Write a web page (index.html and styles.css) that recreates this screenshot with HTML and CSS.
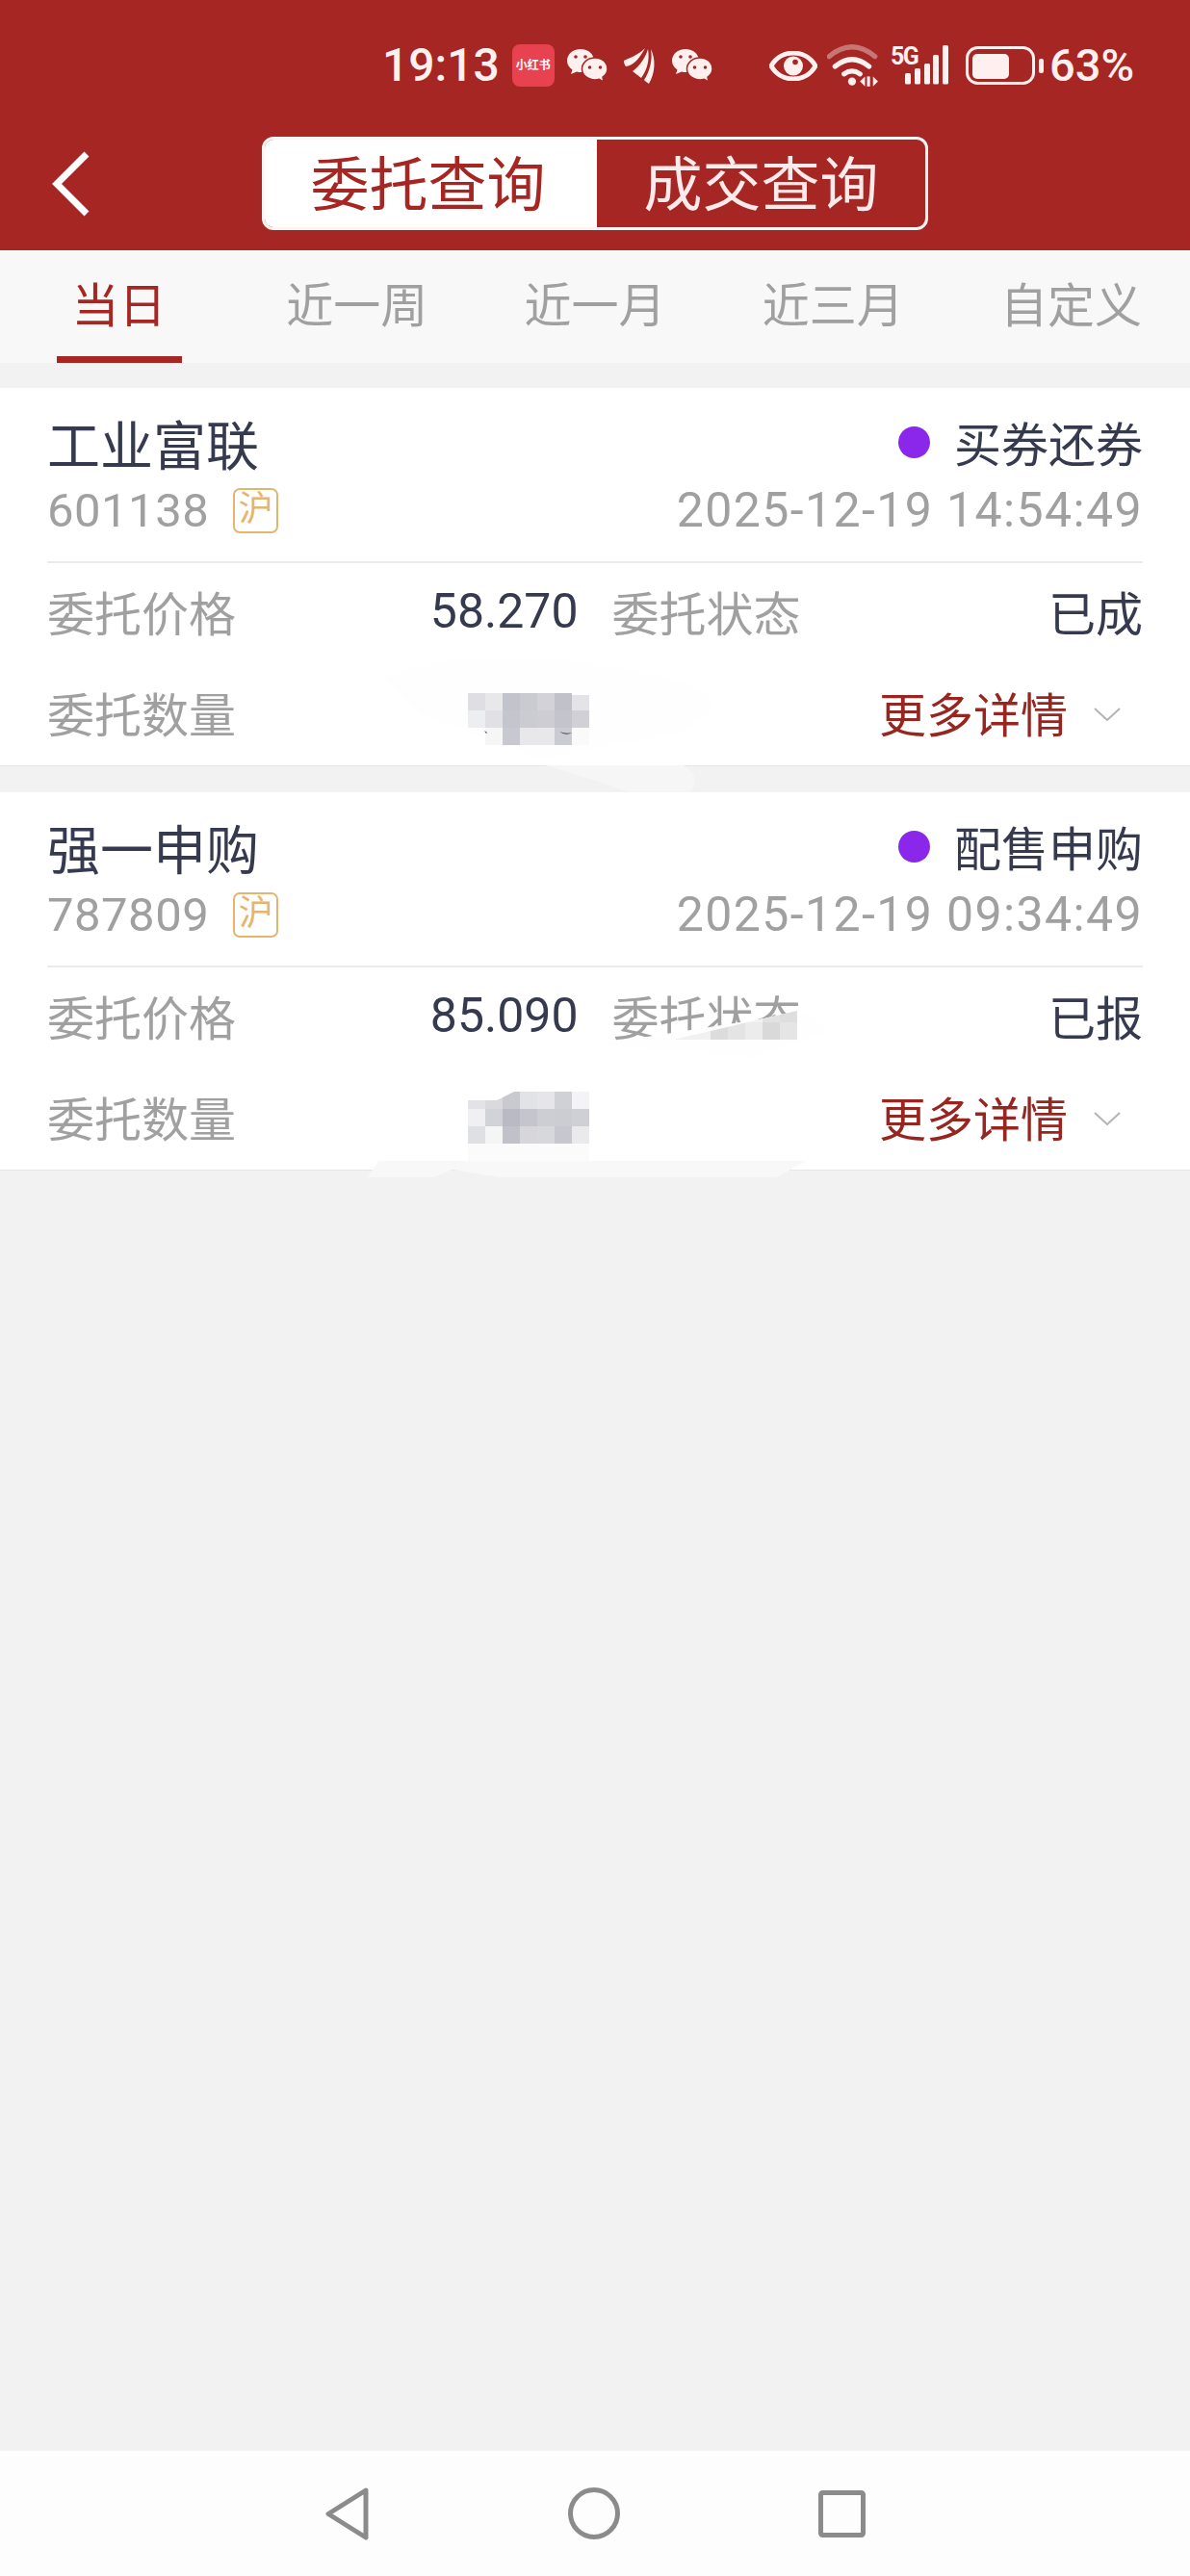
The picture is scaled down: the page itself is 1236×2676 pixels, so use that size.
FILE: index.html

```html
<!DOCTYPE html>
<html lang="zh-CN">
<head>
  <meta charset="UTF-8">
  <title>委托查询</title>
  <link rel="stylesheet" href="styles.css">
</head>
<body>
  <header class="entete">
    <div class="statut">
      <div class="statut-groupe">
        <span class="heure">19:13</span>
        <span class="app-rouge">小红书</span>
        <svg class="ico-wechat" viewBox="0 0 42 35">
          <path class="blanc" d="M14 0C6 0 0 5.500 0 12c0 4 2 7 5.500 9.500L4 26l6-2.500c1.500.5 3 .6 4.500.6C22 24 28 18.500 28 12S22 0 14 0z"/>
          <path class="blanc contour" d="M29 9c-7.500 0-13.500 5-13.500 11.500S21.500 32 29 32c1.500 0 3-.2 4.300-.7L38 34l-1-5c3-2 5-5 5-8.500C42 14 36.500 9 29 9z"/>
          <circle class="rouge" cx="9" cy="8" r="1.800"/><circle class="rouge" cx="19" cy="8" r="1.800"/>
          <circle class="rouge" cx="23.500" cy="19" r="1.800"/><circle class="rouge" cx="34.500" cy="19" r="1.800"/>
        </svg>
        <svg class="ico-plume" viewBox="0 0 33 37">
          <path class="blanc" d="M22 0C16 6 7 10 0 13c0 2 .5 4 2 6 7-1 13-6 20-19z"/>
          <path class="blanc" d="M25 1C23 9 16 19 9 24c3 2 6 5 9 7 6-8 9-19 7-30z"/>
          <path class="blanc" d="M28 1c5 10 5 24-2 36-2-1-4-3-5-4 6-9 9-21 7-32z"/>
        </svg>
        <svg class="ico-wechat" viewBox="0 0 42 35">
          <path class="blanc" d="M14 0C6 0 0 5.500 0 12c0 4 2 7 5.500 9.500L4 26l6-2.500c1.500.5 3 .6 4.500.6C22 24 28 18.500 28 12S22 0 14 0z"/>
          <path class="blanc contour" d="M29 9c-7.500 0-13.500 5-13.500 11.500S21.500 32 29 32c1.500 0 3-.2 4.300-.7L38 34l-1-5c3-2 5-5 5-8.500C42 14 36.500 9 29 9z"/>
          <circle class="rouge" cx="9" cy="8" r="1.800"/><circle class="rouge" cx="19" cy="8" r="1.800"/>
          <circle class="rouge" cx="23.500" cy="19" r="1.800"/><circle class="rouge" cx="34.500" cy="19" r="1.800"/>
        </svg>
      </div>
      <div class="statut-groupe">
        <svg class="ico-oeil" viewBox="0 0 50 31">
          <path class="trait" d="M2 15.500C12-2.500 38-2.500 48 15.500C38 33.500 12 33.500 2 15.500z"/>
          <circle class="blanc" cx="25" cy="15.500" r="10"/>
          <circle class="rouge" cx="27" cy="11.500" r="2.800"/>
        </svg>
        <svg class="ico-wifi" viewBox="0 0 52 42">
          <path class="trait faible" d="M2 12Q25-7 48 12"/>
          <path class="trait" d="M8 22Q25 8 42 22"/>
          <path class="trait" d="M17 29.500Q25 24 33 29.500"/>
          <circle class="blanc" cx="25" cy="37" r="4"/>
          <polygon class="blanc" points="33,37 38,32 38,42"/>
          <rect class="blanc" x="40" y="32" width="3" height="10"/>
          <polygon class="blanc" points="46,32 51,37 46,42"/>
        </svg>
        <svg class="ico-reseau" viewBox="0 0 61 42">
          <text class="cinq-g" x="0" y="20">5G</text>
          <rect class="blanc" x="15" y="29" width="6" height="11.500" rx="1.500"/>
          <rect class="blanc" x="25" y="24" width="6" height="16.500" rx="1.500"/>
          <rect class="blanc" x="35" y="19" width="6" height="21.500" rx="1.500"/>
          <rect class="blanc" x="44" y="10" width="6" height="30.500" rx="1.500"/>
          <rect class="blanc" x="54" y="0" width="6" height="40.500" rx="1.500"/>
        </svg>
        <svg class="ico-batterie" viewBox="0 0 81 40">
          <rect class="trait fin" x="1.500" y="1.500" width="69" height="37" rx="11"/>
          <rect class="blanc" x="7" y="8" width="38" height="26" rx="5"/>
          <rect class="blanc" x="76" y="13" width="5" height="15" rx="2"/>
        </svg>
        <span class="pourcent">63%</span>
      </div>
    </div>
    <div class="titre">
      <svg class="retour" viewBox="0 0 40 68">
        <path d="M36 3L5 34L36 65"/>
      </svg>
      <div class="segment">
        <span class="segment-item actif">委托查询</span>
        <span class="segment-item">成交查询</span>
      </div>
    </div>
  </header>

  <nav class="onglets">
    <span class="onglet actif">当日</span>
    <span class="onglet">近一周</span>
    <span class="onglet">近一月</span>
    <span class="onglet">近三月</span>
    <span class="onglet">自定义</span>
  </nav>

  <main class="liste">
    <article class="carte">
      <div class="ligne-haut">
        <span class="nom">工业富联</span>
        <span class="type"><i class="point"></i>买券还券</span>
      </div>
      <div class="ligne-code">
        <span class="code">601138<b class="marche">沪</b></span>
        <span class="date">2025-12-19 14:54:49</span>
      </div>
      <div class="details">
        <div class="cellule"><span class="label">委托价格</span><span class="valeur">58.270</span></div>
        <div class="cellule"><span class="label">委托状态</span><span class="valeur">已成</span></div>
        <div class="cellule"><span class="label">委托数量</span></div>
        <div class="cellule plus">
          <span class="lien">更多详情</span>
          <svg class="chevron" viewBox="0 0 28 14"><path d="M1 1L14 13L27 1"/></svg>
        </div>
      </div>
      <!-- retouches de la capture : pixels flous et taches -->
      <svg class="retouche" viewBox="0 0 1236 440">
        <path fill="#fefefe" d="M400 300Q480 265 640 290T700 360L560 385L440 340z"/>
        <rect x="486" y="317" width="18" height="18" fill="#dfdfe3"/><rect x="504" y="317" width="18" height="18" fill="#e8e8eb"/>
        <rect x="522" y="317" width="18" height="18" fill="#c3c3cb"/><rect x="540" y="317" width="18" height="18" fill="#cacad1"/>
        <rect x="558" y="317" width="18" height="18" fill="#d2d2d8"/><rect x="576" y="317" width="18" height="18" fill="#c1c1ca"/>
        <rect x="594" y="319" width="18" height="16" fill="#e4e4e8"/>
        <rect x="486" y="335" width="18" height="18" fill="#edeef0"/><rect x="504" y="335" width="18" height="18" fill="#e1e1e5"/>
        <rect x="522" y="335" width="18" height="18" fill="#c5c5cd"/><rect x="540" y="335" width="18" height="18" fill="#cbcbd2"/>
        <rect x="558" y="335" width="18" height="18" fill="#cdcdd3"/><rect x="576" y="335" width="18" height="18" fill="#c4c4cc"/>
        <rect x="594" y="335" width="18" height="18" fill="#d0d0d6"/>
        <rect x="504" y="353" width="18" height="18" fill="#f6f6f7"/><rect x="522" y="353" width="18" height="18" fill="#c8c8d0"/>
        <rect x="540" y="353" width="18" height="18" fill="#e8e8ea"/><rect x="558" y="353" width="18" height="18" fill="#e8e8ea"/>
        <rect x="576" y="353" width="18" height="18" fill="#cbcbd2"/><rect x="594" y="353" width="18" height="18" fill="#fafafa"/>
        <path fill="#3a3e55" d="M581 357Q588 360 594 358Q588 362 581 357zM503 356l3 2l-1 1z"/>
        <path fill="#f6f6f6" d="M567 392H710Q722 398 722 410Q720 420 710 425L665 424L625 410z"/>
      </svg>
    </article>

    <article class="carte">
      <div class="ligne-haut">
        <span class="nom">强一申购</span>
        <span class="type"><i class="point"></i>配售申购</span>
      </div>
      <div class="ligne-code">
        <span class="code">787809<b class="marche">沪</b></span>
        <span class="date">2025-12-19 09:34:49</span>
      </div>
      <div class="details">
        <div class="cellule"><span class="label">委托价格</span><span class="valeur">85.090</span></div>
        <div class="cellule"><span class="label">委托状态</span><span class="valeur">已报</span></div>
        <div class="cellule"><span class="label">委托数量</span></div>
        <div class="cellule plus">
          <span class="lien">更多详情</span>
          <svg class="chevron" viewBox="0 0 28 14"><path d="M1 1L14 13L27 1"/></svg>
        </div>
      </div>
      <svg class="retouche" viewBox="0 0 1236 440">
        <defs><clipPath id="diagonale"><polygon points="699,257 828,227 828,257"/></clipPath></defs>
        <path fill="#fefefe" d="M620 262L840 228L860 250L780 275z"/>
        <polygon fill="#ffffff" points="699,257 828,227 828,257"/>
        <g clip-path="url(#diagonale)">
          <rect x="702" y="239" width="36" height="18" fill="#f1f1f1"/><rect x="738" y="239" width="18" height="18" fill="#dcdcdc"/>
          <rect x="756" y="239" width="18" height="18" fill="#e4e4e4"/><rect x="774" y="239" width="18" height="18" fill="#ececec"/>
          <rect x="792" y="239" width="18" height="18" fill="#d9d9d9"/><rect x="810" y="239" width="18" height="18" fill="#e5e5e5"/>
          <rect x="774" y="227" width="18" height="12" fill="#f2f2f2"/><rect x="792" y="227" width="18" height="12" fill="#e2e2e2"/>
          <rect x="810" y="227" width="18" height="12" fill="#dedede"/>
        </g>
        <rect x="486" y="311" width="18" height="18" fill="#e2e3e6"/><rect x="504" y="311" width="18" height="18" fill="#d9d9de"/>
        <rect x="522" y="311" width="18" height="18" fill="#c9cad0"/><rect x="540" y="311" width="18" height="18" fill="#e2e3e7"/>
        <rect x="558" y="311" width="18" height="18" fill="#e6e6e9"/><rect x="576" y="311" width="18" height="18" fill="#d0d1d6"/>
        <rect x="594" y="311" width="18" height="18" fill="#f4f4f6"/>
        <polygon fill="#ffffff" points="486,311 534,311 516,320 486,320"/>
        <rect x="486" y="329" width="18" height="18" fill="#f0f0f2"/><rect x="504" y="329" width="18" height="18" fill="#d2d3d8"/>
        <rect x="522" y="329" width="18" height="18" fill="#b9bac3"/><rect x="540" y="329" width="18" height="18" fill="#c5c6cd"/>
        <rect x="558" y="329" width="18" height="18" fill="#cdced4"/><rect x="576" y="329" width="18" height="18" fill="#ccccd3"/>
        <rect x="594" y="329" width="18" height="18" fill="#cfd0d6"/>
        <rect x="486" y="347" width="18" height="18" fill="#dfe0e4"/><rect x="504" y="347" width="18" height="18" fill="#f5f5f6"/>
        <rect x="522" y="347" width="18" height="18" fill="#c0c1c9"/><rect x="540" y="347" width="18" height="18" fill="#d6d6db"/>
        <rect x="558" y="347" width="18" height="18" fill="#d7d8dc"/><rect x="576" y="347" width="18" height="18" fill="#c6c7cf"/>
        <rect x="594" y="347" width="18" height="18" fill="#eaeaed"/>
        <rect x="486" y="365" width="126" height="18" fill="#fbfbfb"/>
        <path fill="#f8f8f8" d="M382 400L393 383H838L806 400H520L470 392L450 400z"/>
      </svg>
    </article>
  </main>

  <footer class="navigation">
    <svg class="nav-retour" viewBox="0 0 46 55"><path d="M42 3L3 27.500L42 52z"/></svg>
    <svg class="nav-accueil" viewBox="0 0 54 54"><circle cx="27" cy="27" r="24.500"/></svg>
    <svg class="nav-apps" viewBox="0 0 49 49"><rect x="2.500" y="2.500" width="44" height="44" rx="2"/></svg>
  </footer>
</body>
</html>
```

FILE: styles.css

```css
* {
  box-sizing: border-box;
}

body {
  margin: 0;
  min-height: 100vh;
  display: flex;
  flex-direction: column;
  background-color: #f2f2f2;
  font-family: Roboto, "Noto Sans CJK SC", sans-serif;
  color: #363a4f;
}

/* entete rouge */
.entete {
  height: 260px;
  background-color: #a52622;
}

.statut {
  height: 142px;
  padding: 46px 58px 0 397px;
  display: flex;
  justify-content: space-between;
  align-items: flex-start;
  color: #fdf0ef;
}

.statut-groupe {
  height: 44px;
  display: flex;
  align-items: center;
  gap: 13px;
}

.heure,
.pourcent {
  font-weight: 500;
  line-height: 44px;
}

.heure {
  font-size: 48px;
}

.pourcent {
  font-size: 47px;
  margin-left: -7px;
}

.app-rouge {
  width: 44px;
  height: 44px;
  display: flex;
  justify-content: center;
  align-items: center;
  border-radius: 8px;
  background-color: #e8414f;
  color: #fff;
  font-size: 12px;
  font-weight: 700;
  line-height: 1;
}

.statut svg {
  flex: none;
}

.ico-wechat {
  width: 42px;
  height: 35px;
}

.ico-plume {
  width: 33px;
  height: 37px;
  margin: 0 4px;
}

.ico-oeil {
  width: 50px;
  height: 31px;
}

.ico-wifi {
  width: 54px;
  height: 44px;
  margin-left: -3px;
}

.ico-reseau {
  width: 61px;
  height: 42px;
  margin-left: -1px;
}

.ico-batterie {
  width: 81px;
  height: 40px;
  margin-left: 4px;
}

.blanc {
  fill: #fdf0ef;
}

.rouge {
  fill: #a52622;
}

.contour {
  stroke: #a52622;
  stroke-width: 1.5;
}

.trait {
  fill: none;
  stroke: #fdf0ef;
  stroke-width: 5;
  stroke-linecap: round;
}

.trait.fin {
  stroke-width: 3;
}

.faible {
  opacity: 0.4;
}

.cinq-g {
  fill: #fdf0ef;
  font-size: 25px;
  font-weight: 700;
  letter-spacing: -1.5px;
}

.titre {
  display: grid;
  grid-template-columns: 1fr auto 1fr;
}

.retour {
  width: 40px;
  height: 68px;
  margin: 15px 0 0 54px;
}

.retour path {
  fill: none;
  stroke: #fff;
  stroke-width: 7;
}

.segment {
  width: 692px;
  height: 97px;
  display: flex;
  border: 3px solid #fdf3f2;
  border-radius: 12px;
  overflow: hidden;
}

.segment-item {
  flex: 1;
  font-size: 61px;
  line-height: 96px;
  text-align: center;
  color: #fdeaea;
}

.segment-item.actif {
  flex: 0 0 345px;
  padding-right: 6px;
  background-color: #fff;
  color: #a52622;
}

/* onglets de periode */
.onglets {
  height: 117px;
  display: grid;
  grid-template-columns: repeat(5, 1fr);
  background-color: #f8f8f8;
}

.onglet {
  font-size: 49px;
  line-height: 118px;
  text-align: center;
  color: #a0a0a0;
}

.onglet.actif {
  justify-self: center;
  width: 130px;
  height: 117px;
  color: #a52622;
  border-bottom: 7px solid #a52622;
}

/* cartes */
.liste {
  margin-top: 26px;
  display: flex;
  flex-direction: column;
  gap: 27px;
}

.carte {
  position: relative;
  height: 393px;
  padding: 31px 49px 0;
  background-color: #fff;
  border-bottom: 1px solid #e6e6e6;
}

.ligne-haut,
.ligne-code {
  height: 60px;
  display: flex;
  justify-content: space-between;
  align-items: center;
}

.ligne-code {
  margin-top: 6px;
}

.nom {
  font-size: 55px;
  line-height: 60px;
}

.type {
  display: flex;
  align-items: center;
  gap: 25px;
  font-size: 49px;
  line-height: 60px;
}

.point {
  width: 33px;
  height: 33px;
  margin-top: -10px;
  border-radius: 50%;
  background-color: #8b27ea;
}

.code {
  display: flex;
  align-items: center;
  font-size: 49px;
  letter-spacing: 0.5px;
  color: #a0a0a0;
}

.marche {
  width: 47px;
  height: 47px;
  margin-left: 25px;
  border: 2px solid #e5b56e;
  border-radius: 7px;
  font-size: 36px;
  font-weight: 400;
  line-height: 41px;
  letter-spacing: 0;
  text-align: center;
  color: #e5b56e;
}

.date {
  font-size: 50px;
  letter-spacing: 1.4px;
  color: #a0a0a0;
}

.details {
  margin-top: 23px;
  border-top: 2px solid #ebebeb;
  display: grid;
  grid-template-columns: 1fr 1fr;
  grid-auto-rows: 105px;
  column-gap: 35px;
}

.cellule {
  display: flex;
  justify-content: space-between;
  align-items: center;
  padding-bottom: 6px;
  font-size: 49px;
}

.cellule:first-child .valeur {
  font-size: 50px;
}

.label {
  color: #a0a0a0;
}

.plus {
  justify-content: flex-end;
  gap: 27px;
  padding-right: 23px;
}

.lien {
  color: #96261f;
}

.chevron {
  width: 28px;
  height: 14px;
  margin-top: 4px;
}

.chevron path {
  fill: none;
  stroke: #b4b4b4;
  stroke-width: 2;
}

.retouche {
  position: absolute;
  left: 0;
  top: 0;
  width: 1236px;
  height: 440px;
  pointer-events: none;
}

/* barre systeme */
.navigation {
  height: 130px;
  margin-top: auto;
  display: flex;
  justify-content: center;
  align-items: center;
  gap: 206px;
  background-color: #fdfdfd;
}

.navigation svg {
  fill: none;
  stroke: #8b8b8b;
  stroke-width: 5;
  stroke-linejoin: round;
}

.nav-retour {
  width: 46px;
  height: 55px;
}

.nav-accueil {
  width: 54px;
  height: 54px;
}

.nav-apps {
  width: 49px;
  height: 49px;
}
```
